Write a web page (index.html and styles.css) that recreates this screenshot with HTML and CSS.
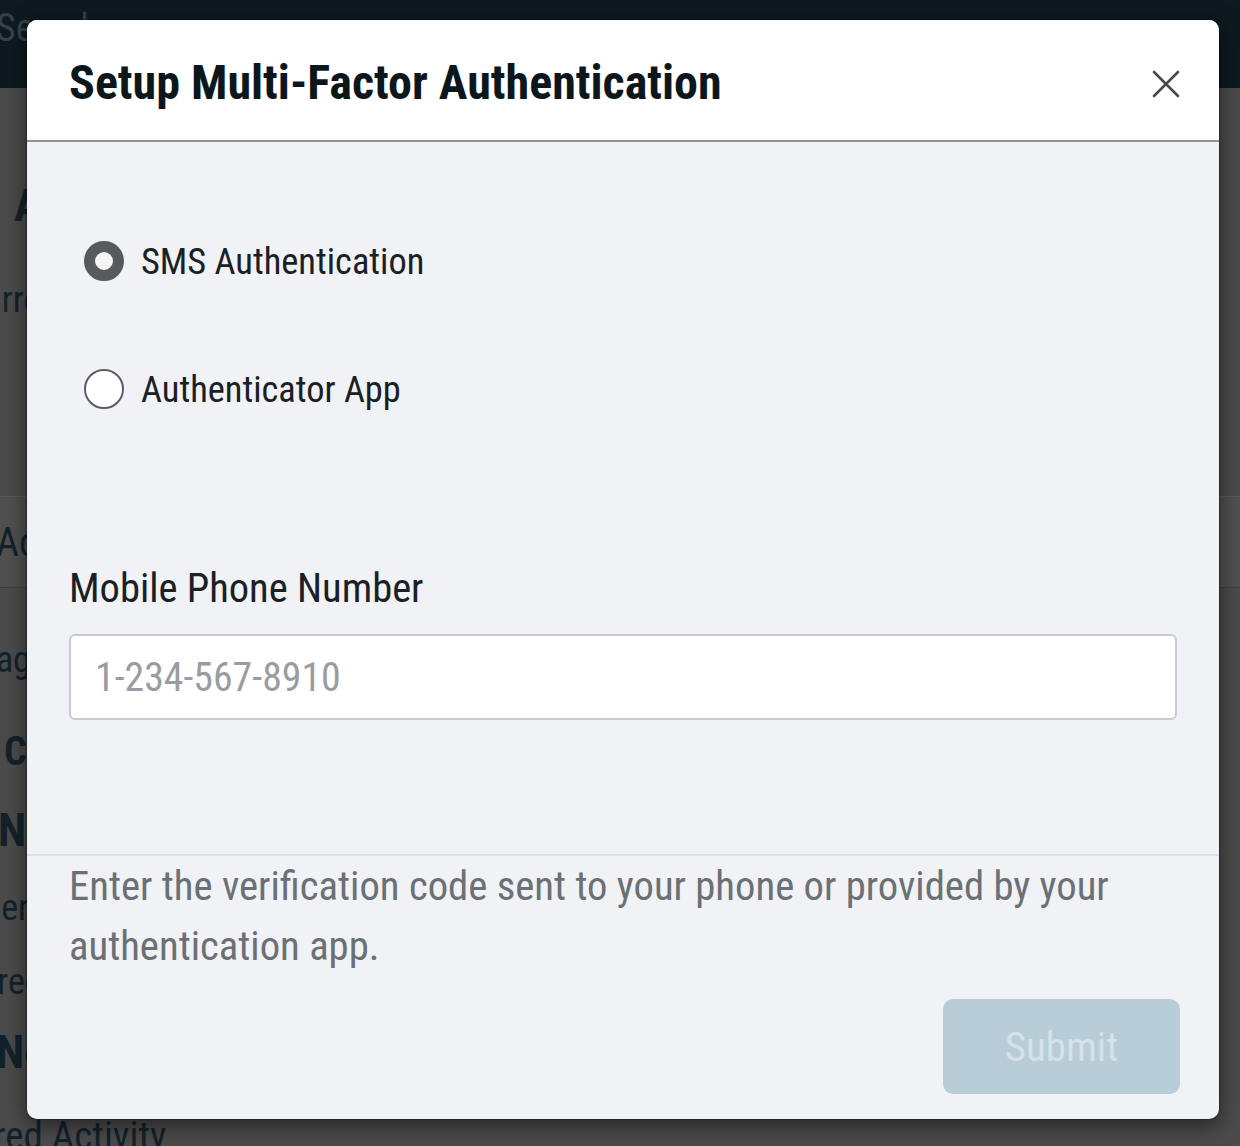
FILE: index.html
```html
<!DOCTYPE html>
<html lang="en">
<head>
<meta charset="utf-8">
<title>Setup Multi-Factor Authentication</title>
<link rel="stylesheet" href="styles.css">
</head>
<body>
<div class="page">
  <header class="topbar"><span class="search">Search</span></header>
  <main class="content">
    <div class="bg-h1">Account Settings</div>
    <div class="bg-t1">Current Password</div>
    <div class="bg-band"><span class="bg-t2">Account</span></div>
    <div class="bg-t3">Manage</div>
    <div class="bg-h2">Contact</div>
    <div class="bg-h3">Notifications</div>
    <div class="bg-t4">Order updates</div>
    <div class="bg-t5">Shared items</div>
    <div class="bg-h4">Notes</div>
    <div class="bg-t6">Shared Activity</div>
  </main>
</div>

<div class="modal" role="dialog" aria-labelledby="mfa-title">
  <div class="modal-header">
    <h1 class="modal-title" id="mfa-title">Setup Multi-Factor Authentication</h1>
    <svg class="close" viewBox="0 0 28 28" aria-label="Close">
      <path d="M2 2 L26 26 M26 2 L2 26" stroke="#474a4c" stroke-width="2.6" stroke-linecap="round" fill="none"/>
    </svg>
  </div>
  <div class="modal-body">
    <div class="radio-row"><span class="radio checked"></span><span>SMS Authentication</span></div>
    <div class="radio-row"><span class="radio"></span><span>Authenticator App</span></div>
    <div class="field-label">Mobile Phone Number</div>
    <div class="input"><span class="placeholder">1-234-567-8910</span></div>
  </div>
  <div class="modal-footer">
    <p class="hint">Enter the verification code sent to your phone or provided by your authentication app.</p>
    <div class="btn-submit">Submit</div>
  </div>
</div>
</body>
</html>
```

FILE: styles.css
```css
* { box-sizing: border-box; }
html, body { margin: 0; padding: 0; }
body {
  width: 1240px;
  height: 1146px;
  overflow: hidden;
  position: relative;
  background: #4b4b4c;
  font-family: "Roboto Condensed", Roboto, "Liberation Sans", sans-serif;
}

/* background page (dimmed) */
.page { height: 100%; }
.topbar {
  height: 88px;
  background: #0e1a1f;
  color: #33434a;
  font-size: 38px;
  line-height: 56px;
}
.search { margin-left: -4px; }
.content {
  display: flex;
  flex-direction: column;
  align-items: flex-start;
  color: #13222a;
  font-size: 36px;
  line-height: 40px;
}
.bg-h1 { font-weight: 700; font-size: 44px; margin: 98px 0 0 14px; }
.bg-t1 { margin: 54px 0 0 -36px; }
.bg-band {
  align-self: stretch;
  margin-top: 176px;
  height: 92px;
  border-top: 1px solid #5a5a5b;
  border-bottom: 1px solid #3f3f40;
  background: #505051;
  padding-top: 26px;
}
.bg-t2 { margin-left: -4px; font-size: 40px; }
.bg-t3 { margin: 52px 0 0 -66px; }
.bg-h2 { font-weight: 700; font-size: 40px; margin: 52px 0 0 4px; }
.bg-h3 { font-weight: 700; font-size: 46px; margin: 38px 0 0 -2px; }
.bg-t4 { margin: 38px 0 0 -49px; }
.bg-t5 { margin: 34px 0 0 -56px; }
.bg-h4 { font-weight: 700; font-size: 46px; margin: 30px 0 0 -4px; }
.bg-t6 { margin: 44px 0 0 -64px; font-size: 39px; }

/* modal */
.modal {
  position: absolute;
  left: 27px;
  top: 20px;
  width: 1192px;
  height: 1099px;
  background: #f0f2f6;
  border-radius: 10px;
  box-shadow: 0 6px 22px rgba(0, 0, 0, 0.55), 0 0 0 1px rgba(0,0,0,0.25);
  overflow: hidden;
  display: flex;
  flex-direction: column;
}
.modal-header {
  height: 122px;
  flex: none;
  background: #ffffff;
  border-bottom: 2px solid #8f9497;
  display: flex;
  align-items: center;
  justify-content: space-between;
  padding: 4px 39px 0 42px;
}
.modal-title {
  margin: 0;
  font-size: 48px;
  font-weight: 700;
  color: #0c171c;
}
.close { width: 28px; height: 28px; flex: none; margin-top: 4px; }

.modal-body {
  height: 714px;
  flex: none;
  padding: 99px 42px 0;
  border-bottom: 2px solid #dcdfe3;
}
.radio-row {
  display: flex;
  align-items: center;
  gap: 17px;
  height: 40px;
  margin-left: 15px;
  font-size: 36.4px;
  color: #1b2024;
}
.radio-row + .radio-row { margin-top: 88px; }
.radio {
  width: 40px;
  height: 40px;
  border-radius: 50%;
  border: 2px solid #5b5e60;
  background: #ffffff;
  flex: none;
}
.radio.checked { border: 11px solid #58595b; background: #f6f6f7; }

.field-label {
  margin-top: 155px;
  font-size: 40.5px;
  line-height: 48px;
  color: #1b2024;
}
.input {
  margin-top: 22px;
  height: 86px;
  width: 100%;
  background: #ffffff;
  border: 2px solid #c9cccf;
  border-radius: 6px;
  display: flex;
  align-items: center;
  padding-left: 24px;
  font-size: 39.8px;
}
.placeholder { color: #9a9da0; }

.modal-footer {
  flex: 1;
  display: flex;
  flex-direction: column;
  padding: 0 39px 25px 42px;
}
.hint {
  margin: 0;
  font-size: 40.7px;
  line-height: 60px;
  color: #6b7074;
}
.btn-submit {
  margin-top: 23px;
  align-self: flex-end;
  width: 237px;
  height: 95px;
  border-radius: 10px;
  background: #b8cdd8;
  color: #d5e2e9;
  font-size: 41px;
  display: flex;
  align-items: center;
  justify-content: center;
}
```
